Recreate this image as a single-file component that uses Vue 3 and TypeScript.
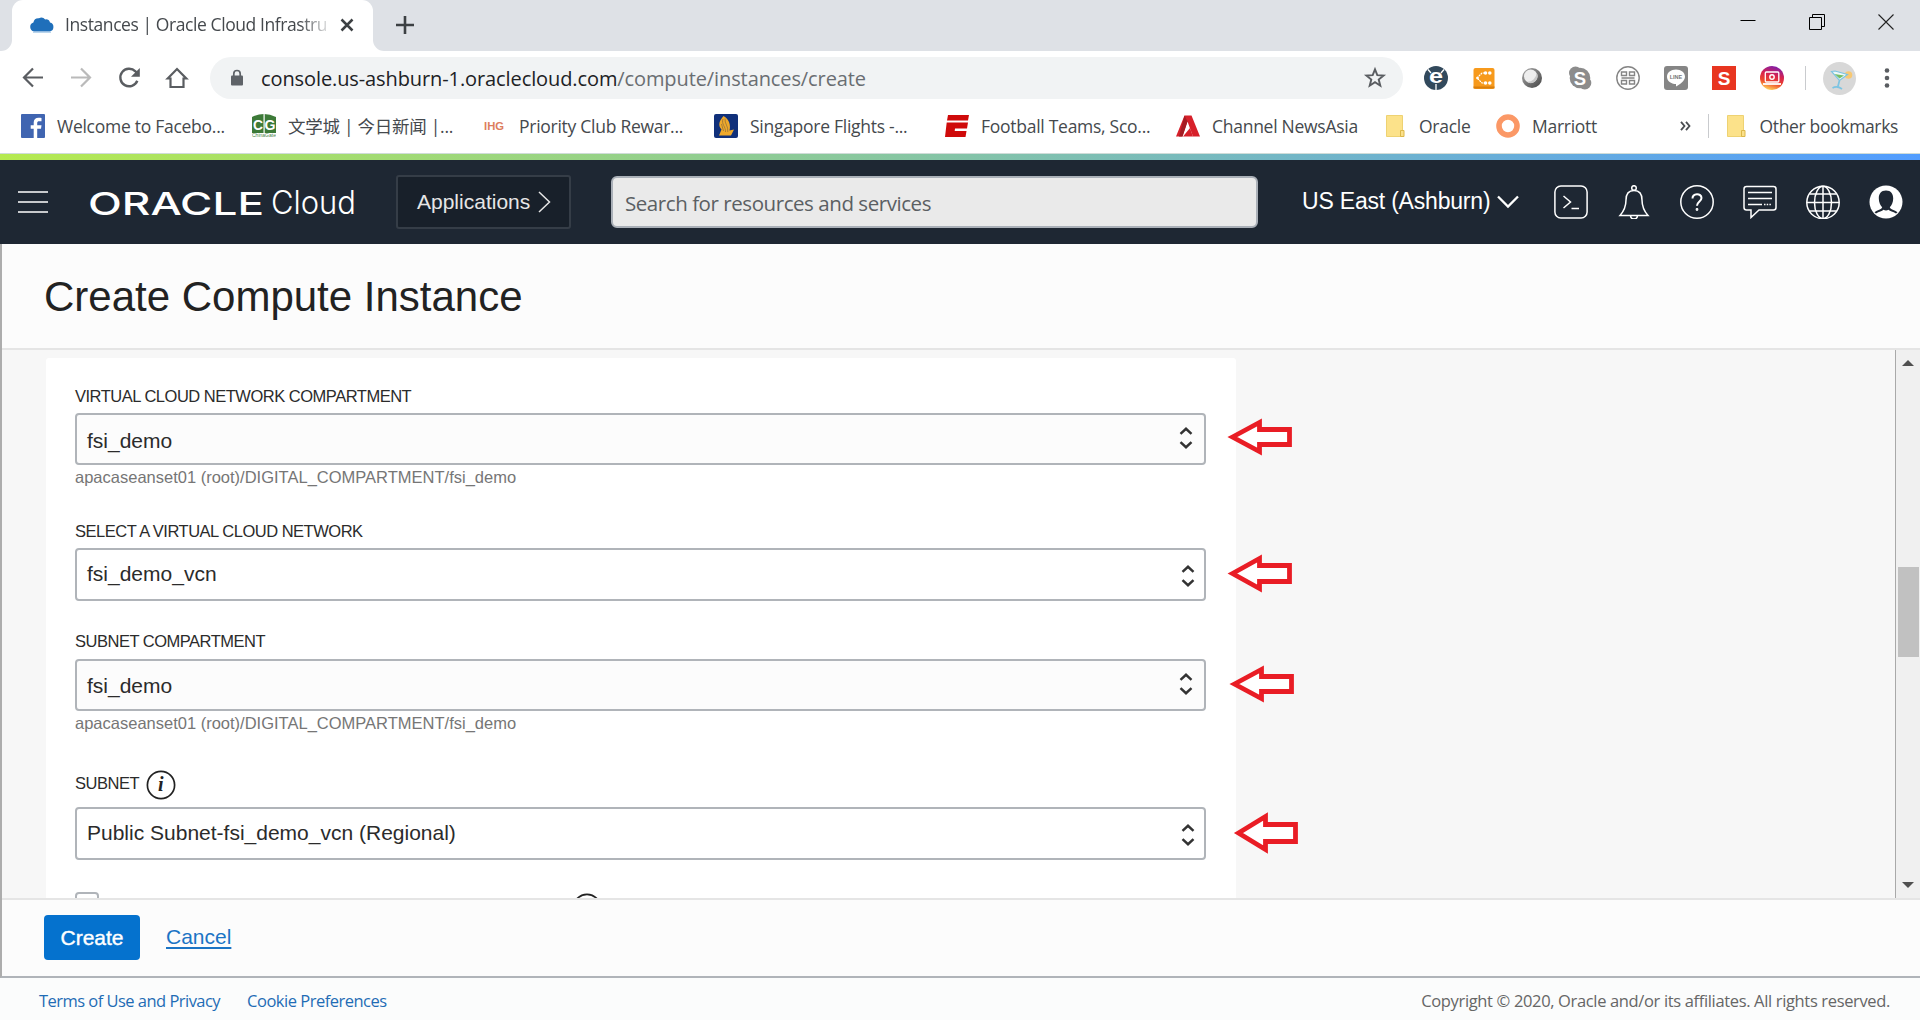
<script setup lang="ts">
interface Bookmark {
  label: string
  icon: string
  size: 'wide' | 'medium' | 'narrow' | 'auto'
}

interface Field {
  label: string
  value: string
  hint?: string
  info?: boolean
  kind: string
}

const bookmarks: Bookmark[] = [
  { label: 'Welcome to Facebo...', icon: 'facebook', size: 'wide' },
  { label: '文学城 | 今日新闻 |...', icon: 'chinagate', size: 'wide' },
  { label: 'Priority Club Rewar...', icon: 'ihg', size: 'wide' },
  { label: 'Singapore Flights -...', icon: 'singapore', size: 'wide' },
  { label: 'Football Teams, Sco...', icon: 'espn', size: 'wide' },
  { label: 'Channel NewsAsia', icon: 'cna', size: 'medium' },
  { label: 'Oracle', icon: 'folder', size: 'narrow' },
  { label: 'Marriott', icon: 'marriott', size: 'auto' },
]

const compartmentPath = 'apacaseanset01 (root)/DIGITAL_COMPARTMENT/fsi_demo'

const fields: Field[] = [
  { label: 'VIRTUAL CLOUD NETWORK COMPARTMENT', value: 'fsi_demo', hint: compartmentPath, kind: 'vcn-compartment' },
  { label: 'SELECT A VIRTUAL CLOUD NETWORK', value: 'fsi_demo_vcn', kind: 'vcn' },
  { label: 'SUBNET COMPARTMENT', value: 'fsi_demo', hint: compartmentPath, kind: 'subnet-compartment' },
  { label: 'SUBNET', value: 'Public Subnet-fsi_demo_vcn (Regional)', info: true, kind: 'subnet' },
]

// Each arrow: tip x, centre y, half height of the head, half height of the shaft.
const arrows: [number, number, number, number][] = [
  [1230.5, 87, 14.5, 7.5],
  [1230.5, 223.5, 15, 8],
  [1232.5, 334, 14.5, 7.5],
  [1236.5, 483, 16.5, 8.5],
]

function arrowPath([x, y, head, shaft]: [number, number, number, number]): string {
  const neck = x + 27
  const end = x + 57
  return `M${x} ${y}L${neck} ${y - head}V${y - shaft}H${end}V${y + shaft}H${neck}V${y + head}Z`
}
</script>

<template>
  <div class="window">
    <header class="tabstrip">
      <div class="strip-left"></div>
      <div class="tab-slot">
        <div class="tab">
          <svg class="favicon" width="24" height="16" viewBox="0 0 24 16">
            <path d="M4 14.500A4.600 4.600 0 0 1 3.400 5.600 5.300 5.300 0 0 1 9 1.200 5.300 5.300 0 0 1 15.200 2.400 4.400 4.400 0 0 1 20 5.600 4.600 4.600 0 0 1 20 14.500Z" fill="#1f6fba" />
            <path d="M3 15.300H21" stroke="#a9cbe8" stroke-width="1" />
          </svg>
          <span class="tab-title">Instances | Oracle Cloud Infrastru</span>
          <svg width="14" height="14" viewBox="0 0 14 14"><path d="M1.500 1.500 12.500 12.500M12.500 1.500 1.500 12.500" stroke="#3c4043" stroke-width="2.500" /></svg>
        </div>
      </div>
      <div class="strip-rest">
        <svg width="18" height="18" viewBox="0 0 18 18"><path d="M9 0V18M0 9H18" stroke="#3c4043" stroke-width="2.600" /></svg>
        <div class="window-buttons">
          <svg width="16" height="16" viewBox="0 0 16 16"><path d="M.5 6.500H15.500" stroke="#000" /></svg>
          <svg width="16" height="16" viewBox="0 0 16 16"><path d="M.5 3.500H12.500V15.500H.5ZM3.500 3.500V.5H15.500V12.500H12.500" fill="none" stroke="#000" /></svg>
          <svg width="16" height="16" viewBox="0 0 16 16"><path d="M.5 .5 15.500 15.500M15.500 .5 .5 15.500" stroke="#222" stroke-width="1.100" /></svg>
        </div>
      </div>
    </header>

    <div class="toolbar">
      <nav class="nav">
        <svg viewBox="0 0 24 24"><path d="M22 11.500H3.500M12 2.500 3 11.500 12 20.500" fill="none" stroke="#5a5d61" stroke-width="2.200" /></svg>
        <svg viewBox="0 0 24 24"><path d="M2 11.500H20.500M12 2.500 21 11.500 12 20.500" fill="none" stroke="#bababa" stroke-width="2.200" /></svg>
        <svg viewBox="0 0 24 24"><path d="M20.300 14.800A8.800 8.800 0 1 1 18.400 5.300L20 7" fill="none" stroke="#5a5d61" stroke-width="2.400" /><path d="M22.800 2V10.800H14Z" fill="#5a5d61" /></svg>
        <svg viewBox="0 0 24 24"><path d="M2.700 12.500 12 3 21.300 12.500H18.500V21H5.500V12.500Z" fill="none" stroke="#5a5d61" stroke-width="2.200" /></svg>
      </nav>
      <div class="omnibox">
        <svg class="lock" width="14" height="18" viewBox="0 0 14 18">
          <rect x="1" y="6.500" width="12" height="10" rx="1" fill="#5f6368" />
          <path d="M3.800 7V4.700a3.200 3.200 0 0 1 6.400 0V7" fill="none" stroke="#5f6368" stroke-width="1.700" />
        </svg>
        <span class="url"><span class="host">console.us-ashburn-1.oraclecloud.com</span>/compute/instances/create</span>
        <svg class="star" width="24" height="24" viewBox="0 0 24 24"><path d="M12 3.300 14.300 9.100 20.600 9.500 15.700 13.500 17.300 19.700 12 16.200 6.700 19.700 8.300 13.500 3.400 9.500 9.700 9.100Z" fill="none" stroke="#5a5d61" stroke-width="1.900" /></svg>
      </div>
      <div class="extensions">
        <svg viewBox="0 0 24 24"><circle cx="12" cy="12" r="12" fill="#32495c" /><path d="M4 3.500 7 7M20 3.500 17 7M12 18V24" stroke="#fff" stroke-width="1.300" /><text x="12" y="17" font-size="21" font-weight="700" text-anchor="middle" textLength="14" lengthAdjust="spacingAndGlyphs" fill="#fff">e</text></svg>
        <svg viewBox="0 0 24 24"><rect x="1.500" y="2" width="21" height="21" rx="2" fill="#f79a1c" /><path d="M1.500 21.500H22.500" stroke="#d97f0c" stroke-width="2" /><path d="M13 7H10L5 12 10 17H13" fill="none" stroke="#fff" stroke-width="1.200" stroke-dasharray="2 .7" /><g fill="#fff"><circle cx="5.500" cy="12" r="1.300" /><circle cx="13.500" cy="7" r="1.800" /><circle cx="17.800" cy="7" r="1.800" /><circle cx="13.500" cy="17" r="1.800" /><circle cx="17.800" cy="17" r="1.800" /></g></svg>
        <svg viewBox="0 0 24 24"><defs><linearGradient id="orb" x1="0" y1="0" x2="1" y2="1"><stop offset="0" stop-color="#aaa" /><stop offset="1" stop-color="#444" /></linearGradient></defs><circle cx="12" cy="12" r="10" fill="url(#orb)" /><circle cx="10.700" cy="10.300" r="6.700" fill="#eee" /><path d="M16.500 6.500A6.800 6.800 0 0 1 7 15.800 9 9 0 0 0 16.500 6.500" fill="#c8c8c8" /></svg>
        <svg viewBox="0 0 24 24"><g fill="#8c8c8c"><circle cx="12" cy="12" r="10.300" /><circle cx="7.500" cy="7" r="6.500" /><circle cx="16.800" cy="17" r="6.500" /></g><text x="12" y="18.500" font-size="18.500" font-weight="700" text-anchor="middle" fill="#fff">S</text></svg>
        <svg viewBox="0 0 24 24"><circle cx="12" cy="12" r="11.200" fill="#fff" stroke="#858585" stroke-width="1.400" /><path d="M5.500 6H10.500V9.500H5.500ZM18.500 6H13.500V9.500H18.500ZM5.500 18H10.500V14.500H5.500ZM18.500 18H13.500V14.500H18.500ZM5.500 12H18.500" fill="none" stroke="#858585" stroke-width="1.400" /></svg>
        <svg viewBox="0 0 24 24"><rect width="24" height="24" rx="3" fill="#858585" /><path d="M12 3.500C17 3.500 21 6.500 21 10.700 21 15 15.500 18.500 12 20.500V18C7 18 3 15 3 10.700 3 6.500 7 3.500 12 3.500Z" fill="#fff" /><text x="12" y="13" font-size="5.500" font-weight="700" text-anchor="middle" fill="#777">LINE</text></svg>
        <svg viewBox="0 0 24 24"><rect width="24" height="24" fill="#e83520" /><text x="12" y="18.700" font-size="19" font-weight="700" text-anchor="middle" fill="#fff">S</text></svg>
        <svg viewBox="0 0 24 24"><defs><linearGradient id="insta" x1=".7" y1="0" x2=".4" y2="1"><stop offset="0" stop-color="#7a1fb0" /><stop offset=".4" stop-color="#d8224d" /><stop offset=".7" stop-color="#ee4a2a" /><stop offset="1" stop-color="#ffd35a" /></linearGradient></defs><circle cx="12" cy="12" r="12" fill="url(#insta)" /><rect x="5.300" y="6" width="13.500" height="10" rx="1" fill="none" stroke="#fff" stroke-width="1.300" /><path d="M3 18H21" stroke="#fff" stroke-width="1.800" /><circle cx="12" cy="11" r="2.200" fill="none" stroke="#fff" stroke-width="1.400" /></svg>
      </div>
      <span class="divider"></span>
      <svg class="avatar" viewBox="0 0 33 33"><circle cx="16.500" cy="16.500" r="16.500" fill="#d8d8d8" /><circle cx="25.500" cy="13" r="3.800" fill="#f7c873" /><path d="M8.500 9.500 12 9 24.500 12.500 16.500 18.500Z" fill="#eef9f7" stroke="#7cc4e2" stroke-width="1.200" /><path d="M11.500 12 21 13.500 16.500 16.500Z" fill="#74bd68" /><path d="M16.500 18.500 14.500 26M9.500 26Q14 23.500 19 27" fill="none" stroke="#7cc4e2" stroke-width="1.700" /></svg>
      <svg class="menu" width="6" height="22" viewBox="0 0 6 22"><g fill="#5a5d61"><circle cx="3" cy="3.500" r="2.300" /><circle cx="3" cy="11" r="2.300" /><circle cx="3" cy="18.500" r="2.300" /></g></svg>
    </div>

    <div class="bookmarks">
      <div v-for="b in bookmarks" :key="b.label" class="bookmark" :class="b.size">
        <svg v-if="b.icon === 'facebook'" viewBox="0 0 24 24"><rect width="24" height="24" rx="1" fill="#4065b1" /><path d="M16.200 24V14.800H20L20.500 11.200H16.200V9C16.200 7.800 16.800 7.200 18.200 7.200H20.500V4C19.800 3.900 18.800 3.800 17.500 3.800 14.600 3.800 12.700 5.500 12.700 8.600V11.200H9.700V14.800H12.700V24Z" fill="#fff" /></svg>
        <svg v-else-if="b.icon === 'chinagate'" viewBox="0 0 24 24"><path d="M0 3Q12-3 24 3V19H0Z" fill="#3d7a38" /><path d="M11.500 0H12.700V19H11.500Z" fill="#fff" /><text x="1" y="16" font-size="14" font-weight="700" textLength="10" lengthAdjust="spacingAndGlyphs" fill="#fff">C</text><text x="12.500" y="16" font-size="14" font-weight="700" textLength="11" lengthAdjust="spacingAndGlyphs" fill="#fff">G</text><text x="0" y="22.800" font-size="4.800" textLength="24" lengthAdjust="spacingAndGlyphs" fill="#4d8549">ChinaGate</text></svg>
        <svg v-else-if="b.icon === 'ihg'" viewBox="0 0 24 24"><text x="1" y="15.500" font-size="10" font-weight="700" textLength="20" lengthAdjust="spacingAndGlyphs" fill="#dd7d5e">IHG</text></svg>
        <svg v-else-if="b.icon === 'singapore'" viewBox="0 0 24 24"><rect width="24" height="24" rx="2" fill="#10307a" /><path d="M9.500 2C5.500 6.500 3.500 11 7.500 15.500L5 21.500 17 21.500 20 15.500 15.500 16.500C17 11 15 5 9.500 2Z" fill="#efa92b" /><path d="M9 5C7 10 12 13 11.500 18M11 4.500C10.500 10 14.500 12 13.800 18M7.500 10 9.500 17" fill="none" stroke="#8a6a3a" stroke-width=".7" /></svg>
        <svg v-else-if="b.icon === 'espn'" viewBox="0 0 24 24"><path d="M3 1H24L23 6.500H2ZM1.700 8.500H23L22 14.500H10L9.700 17H21.500L20.500 23H0Z" fill="#cf0a0a" /></svg>
        <svg v-else-if="b.icon === 'cna'" viewBox="0 0 24 24"><path d="M8.500 1.500H15.500L24 22.500H17L11.500 7.500 6.500 22.500H0Z" fill="#d7202a" /><path d="M8.500 1.500 11.500 7.500 6.500 22.500H3Z" fill="#a41c23" /><path d="M14 14 17 22.500H7Z" fill="#d7202a" /></svg>
        <svg v-else-if="b.icon === 'folder'" viewBox="0 0 24 24"><path d="M3.500 1.500H19.500V22.500H3.500Z" fill="#fce28a" stroke="#eed272" /><path d="M17.500 22.500V16.500H21V22.500Z" fill="#fbe08a" stroke="#dcb84a" /></svg>
        <svg v-else viewBox="0 0 24 24"><circle cx="12" cy="12" r="9" fill="none" stroke="#fb9866" stroke-width="5.600" /></svg>
        <span>{{ b.label }}</span>
      </div>
      <div class="bookmark-end">
        <svg class="more" width="11" height="10" viewBox="0 0 11 10"><path d="M1 .8 4.500 5 1 9.200M6 .8 9.500 5 6 9.200" fill="none" stroke="#4a4d51" stroke-width="1.800" /></svg>
        <span class="divider"></span>
        <div class="bookmark other">
          <svg viewBox="0 0 24 24"><path d="M3.500 1.500H19.500V22.500H3.500Z" fill="#fce28a" stroke="#eed272" /><path d="M17.500 22.500V16.500H21V22.500Z" fill="#fbe08a" stroke="#dcb84a" /></svg>
          <span>Other bookmarks</span>
        </div>
      </div>
    </div>

    <div class="rainbow"></div>

    <header class="console">
      <svg class="burger" width="30" height="22" viewBox="0 0 30 22"><path d="M0 1H30M0 11H30M0 21H30" stroke="#fff" stroke-width="1.500" /></svg>
      <svg class="brand" width="268" height="54" viewBox="-2 -10 268 54">
        <text x="-2" y="29.500" class="oracle" textLength="176" lengthAdjust="spacingAndGlyphs">ORACLE</text>
        <text x="181" y="29" class="cloud" textLength="85" lengthAdjust="spacingAndGlyphs">Cloud</text>
      </svg>
      <button class="applications">
        Applications
        <svg width="13" height="22" viewBox="0 0 13 22"><path d="M1 1 11.500 11 1 21" fill="none" stroke="#e6e6e6" stroke-width="1.500" /></svg>
      </button>
      <div class="search">Search for resources and services</div>
      <div class="region">
        <span>US East (Ashburn)</span>
        <svg width="22" height="14" viewBox="0 0 22 14"><path d="M1 1.500 11 11.500 21 1.500" fill="none" stroke="#fff" stroke-width="2.300" /></svg>
      </div>
      <div class="actions">
        <svg viewBox="0 0 34 34"><rect x=".9" y=".9" width="32.200" height="32.200" rx="6" /><path d="M9.500 11 16.500 17 9.500 23M17.500 23.500H25" /></svg>
        <svg viewBox="0 0 34 34"><circle cx="17" cy="3" r="2.300" /><path d="M17 5.500C11 5.500 9 10 9 15 9 21 7 26 3 30.500H31C27 26 25 21 25 15 25 10 23 5.500 17 5.500ZM13.500 31C14 35 20 35 20.500 31" /></svg>
        <svg viewBox="0 0 34 34"><circle cx="17" cy="17" r="16.200" /><path d="M12.500 13.500C12.500 7.800 21.500 7.800 21.500 13 21.500 16.500 17 16.500 17 20.800" stroke-width="2" /><circle cx="17" cy="24.500" r=".6" stroke-width="1.600" /></svg>
        <svg viewBox="0 0 34 34"><path d="M3.500 1.500H30.500Q33 1.500 33 4V22.500Q33 25 30.500 25H16L8 32.500V25H3.500Q1 25 1 22.500V4Q1 1.500 3.500 1.500ZM5 7.500H29M5 13.500H29M5 19.500H19" /><path d="M21 19.500H29" stroke-dasharray="1.500 1.200" /></svg>
        <svg viewBox="0 0 34 34"><circle cx="17" cy="17.500" r="16.200" /><ellipse cx="17" cy="17.500" rx="8.500" ry="16.200" /><path d="M17 1.300V33.700M.8 17.500H33.200M3.500 9H30.500M3.500 26H30.500" /></svg>
        <svg class="user" viewBox="0 0 34 34"><circle cx="17" cy="17" r="16.500" fill="#fff" stroke="none" /><path d="M17 5.500C12 5.500 9.800 9 9.800 13.500 9.800 17.500 11.500 20.500 13.200 22.200 12.500 24.500 8.500 25 5.500 27.200L7 28.500C10 26.500 13 26.500 14.500 24.700 16 25.800 18 25.800 19.500 24.700 21 26.500 24 26.500 27 28.500L28.500 27.200C25.500 25 21.500 24.500 20.800 22.200 22.500 20.500 24.200 17.500 24.200 13.500 24.200 9 22 5.500 17 5.500Z" fill="#1e2733" stroke="none" /></svg>
      </div>
    </header>

    <main class="page">
      <div class="title-bar"><h1>Create Compute Instance</h1></div>
      <div class="viewport">
        <div class="content">
          <section class="card">
            <div v-for="f in fields" :key="f.kind" class="field" :class="f.kind">
              <div class="label">
                <span>{{ f.label }}</span>
                <svg v-if="f.info" width="30" height="30" viewBox="0 0 30 30"><circle cx="15" cy="15" r="13.600" fill="none" stroke="#222" stroke-width="1.700" /><text x="14.500" y="21" text-anchor="middle" class="info">i</text></svg>
              </div>
              <div class="select" :class="{ tinted: f.hint }">
                <span>{{ f.value }}</span>
                <svg width="14" height="24" viewBox="0 0 14 24"><path d="M1.500 7.800 7 2.800 12.500 7.800M1.500 16.200 7 21.200 12.500 16.200" fill="none" stroke="#333" stroke-width="2.500" /></svg>
              </div>
              <div v-if="f.hint" class="hint">{{ f.hint }}</div>
            </div>
            <div class="next-row">
              <span class="checkbox"></span>
              <svg width="30" height="30" viewBox="0 0 30 30"><circle cx="15" cy="15" r="13.600" fill="none" stroke="#222" stroke-width="1.700" /></svg>
            </div>
          </section>
        </div>
        <div class="scrollbar">
          <svg class="up" width="12" height="6" viewBox="0 0 12 6"><path d="M0 6 6 0 12 6Z" fill="#505050" /></svg>
          <div class="thumb"></div>
          <svg class="down" width="12" height="6" viewBox="0 0 12 6"><path d="M0 0 6 6 12 0Z" fill="#505050" /></svg>
        </div>
        <svg class="annotations" width="1400" height="548" viewBox="0 0 1400 548">
          <path v-for="(a, i) in arrows" :key="i" :d="arrowPath(a)" fill="#fff" stroke="#e91d25" stroke-width="4.800" />
        </svg>
      </div>
      <div class="action-bar">
        <button class="create">Create</button>
        <a class="cancel">Cancel</a>
      </div>
    </main>

    <footer class="legal">
      <a class="terms">Terms of Use and Privacy</a>
      <a class="cookies">Cookie Preferences</a>
      <span class="copyright">Copyright © 2020, Oracle and/or its affiliates. All rights reserved.</span>
    </footer>
  </div>
</template>

<style>
body {
  margin: 0;
  overflow: hidden;
}
</style>

<style scoped>
.window {
  display: flex;
  flex-direction: column;
  width: 1920px;
  height: 1020px;
  overflow: hidden;
  background: #fff;
  font-family: "Liberation Sans", Arial, sans-serif;
  white-space: nowrap;
}
.window *,
.window *::before {
  box-sizing: border-box;
}
svg {
  display: block;
  flex: none;
}
button {
  font: inherit;
  border: 0;
  padding: 0;
}

/* Browser chrome */
.tabstrip {
  display: flex;
  height: 51px;
  font-family: "Open Sans", "Noto Sans", sans-serif;
}
.strip-left {
  width: 12px;
  background: #dee1e6;
  border-bottom-right-radius: 11px;
}
.tab-slot {
  width: 361px;
  background: linear-gradient(#dee1e6 20px, #fff 20px);
}
.tab {
  display: flex;
  align-items: center;
  height: 51px;
  padding: 0 0 2px 18px;
  background: #fff;
  border-radius: 11px 11px 0 0;
}
.tab-title {
  width: 262px;
  margin: 0 13px 0 11px;
  padding-bottom: 1px;
  overflow: hidden;
  font-size: 17.5px;
  letter-spacing: -0.42px;
  color: #45494d;
  mask-image: linear-gradient(90deg, #000 235px, transparent 268px);
}
.strip-rest {
  flex: 1;
  display: flex;
  justify-content: space-between;
  padding: 0 26px 0 23px;
  background: #dee1e6;
  border-bottom-left-radius: 11px;
}
.strip-rest > svg {
  margin-top: 16px;
}
.window-buttons {
  display: flex;
  gap: 53px;
  margin-top: 14px;
}
.toolbar {
  display: flex;
  align-items: center;
  height: 54px;
  padding-left: 21px;
}
.nav {
  display: flex;
  gap: 24px;
}
.nav svg,
.extensions svg,
.bookmark svg {
  width: 24px;
  height: 24px;
}
.omnibox {
  display: flex;
  align-items: center;
  width: 1193px;
  height: 42px;
  margin: 0 21px;
  padding-left: 20px;
  border-radius: 21px;
  background: #f1f3f4;
  font-family: "Open Sans", "Noto Sans", sans-serif;
}
.url {
  margin-left: 17px;
  font-size: 20px;
  letter-spacing: -0.1px;
  color: #6a6e72;
}
.host {
  color: #202124;
}
.star {
  margin: 0 16px 0 auto;
}
.extensions {
  display: flex;
  gap: 24px;
}
.divider {
  width: 1px;
  height: 24px;
  background: #c9cbce;
}
.toolbar .divider {
  margin-left: 21px;
}
.avatar {
  width: 33px;
  height: 33px;
  margin-left: 17px;
}
.menu {
  margin-left: 28px;
}
.bookmarks {
  display: flex;
  align-items: center;
  gap: 26px;
  height: 48px;
  padding: 0 22px 6px 21px;
  font-family: "Open Sans", "Noto Sans", "Noto Sans CJK SC", sans-serif;
}
.bookmark {
  display: flex;
  align-items: center;
  gap: 12px;
  font-size: 17.5px;
  line-height: 24px;
  letter-spacing: -0.27px;
  color: #45494d;
}
.bookmark span {
  padding-bottom: 1px;
}
.bookmark svg {
  font-family: "Liberation Sans", sans-serif;
  letter-spacing: 0;
}
.wide {
  width: 205px;
}
.medium {
  width: 181px;
}
.narrow {
  width: 87px;
}
.bookmark-end {
  display: flex;
  align-items: center;
  margin-left: auto;
}
.more {
  margin-right: 17px;
}
.bookmark.other {
  margin-left: 15px;
  letter-spacing: -0.35px;
}
.rainbow {
  height: 7px;
  border-top: 1px solid #cfdcd8;
  background: linear-gradient(90deg, #b5ea50, #529dff);
}

/* Console header */
.console {
  display: flex;
  align-items: center;
  height: 84px;
  padding-left: 18px;
  background: #1e2733;
  color: #fff;
}
.brand {
  margin-left: 40px;
}
.oracle {
  font: 500 31.5px Inter, sans-serif;
  fill: #fff;
}
.cloud {
  font: 300 32px Inter, sans-serif;
  fill: #fff;
}
.applications {
  display: flex;
  align-items: center;
  gap: 8px;
  width: 175px;
  height: 54px;
  margin-left: 40px;
  padding-left: 19px;
  border: 2px solid #353d47;
  border-radius: 3px;
  background: #18202a;
  color: #e6e6e6;
  font-size: 21px;
}
.search {
  width: 647px;
  height: 52px;
  margin-left: 40px;
  padding-left: 12px;
  border: 2px solid #aab0b8;
  border-radius: 6px;
  background: #eaeaea;
  color: #5b5f63;
  font: 20.5px/50px "Open Sans", "Noto Sans", sans-serif;
  letter-spacing: -0.44px;
}
.region {
  display: flex;
  align-items: center;
  gap: 7px;
  margin-left: 44px;
  font-size: 23px;
  letter-spacing: -0.2px;
}
.region span {
  padding-bottom: 2px;
}
.actions {
  display: flex;
  gap: 29px;
  margin: 0 17px 0 auto;
}
.actions svg {
  width: 34px;
  height: 34px;
  fill: none;
  stroke: #fff;
  stroke-width: 1.5;
}

/* Page */
.page {
  display: flex;
  flex-direction: column;
  height: 734px;
  border-left: 2px solid #adadad;
  border-bottom: 2px solid #b0b4b9;
  background: #fcfcfc;
}
.title-bar {
  height: 106px;
  padding-left: 42px;
  border-bottom: 2px solid #e5e5e5;
}
h1 {
  margin: 0;
  font-size: 42px;
  font-weight: 400;
  line-height: 106px;
  color: #222;
}
.viewport {
  position: relative;
  display: flex;
  height: 548px;
  overflow: hidden;
  background: #f7f7f7;
}
.content {
  flex: 1;
  padding: 8px 0 0 44px;
}
.card {
  width: 1190px;
  height: 700px;
  padding: 28px 30px 0 29px;
  border-radius: 3px;
  background: #fff;
}
.label {
  display: flex;
  align-items: center;
  gap: 7px;
  height: 20px;
  margin-bottom: 7px;
  font-size: 16.5px;
  letter-spacing: -0.49px;
  color: #2b2b2b;
}
.select {
  display: flex;
  align-items: center;
  justify-content: space-between;
  height: 53px;
  padding: 0 9px 0 10px;
  border: 2px solid #b0b4b9;
  border-radius: 4px;
  font-size: 21px;
  color: #2b2b2b;
}
.select span {
  padding-bottom: 2px;
}
.select svg {
  margin-top: 2px;
}
.select.tinted {
  height: 52px;
  padding: 3px 11px 0 10px;
  background: #fcfcfc;
}
.select.tinted span {
  padding-bottom: 0;
}
.subnet-compartment .select.tinted span {
  padding-bottom: 2px;
}
.select.tinted svg {
  margin-top: -6px;
}
.hint {
  height: 20px;
  margin-top: 2px;
  font-size: 16.5px;
  line-height: 20px;
  color: #767676;
}
.vcn-compartment {
  margin-bottom: 34px;
}
.vcn {
  margin-bottom: 30px;
}
.subnet-compartment {
  margin-bottom: 38px;
}
.subnet-compartment .label {
  margin-bottom: 8px;
}
.subnet {
  margin-bottom: 32px;
}
.subnet .label {
  height: 28px;
  margin-bottom: 8px;
}
.subnet .label span {
  padding-bottom: 4px;
}
.info {
  font: italic 700 20px "Liberation Serif", serif;
  fill: #222;
}
.next-row {
  display: flex;
  justify-content: space-between;
  width: 527px;
}
.next-row svg {
  margin-top: 1px;
}
.checkbox {
  width: 24px;
  height: 24px;
  border: 2px solid #b0b4b9;
  border-radius: 4px;
}
.scrollbar {
  display: flex;
  flex-direction: column;
  align-items: center;
  width: 25px;
  border-left: 1px solid #a9a9a9;
  background: #f0f0f0;
}
.up {
  margin-top: 10px;
}
.thumb {
  width: 21px;
  height: 90px;
  margin-top: 201px;
  background: #c1c1c1;
}
.down {
  margin: auto 0 10px;
}
.annotations {
  position: absolute;
  left: 0;
  top: 0;
}
.action-bar {
  display: flex;
  flex: 1;
  align-items: center;
  gap: 26px;
  padding: 0 0 1px 42px;
  border-top: 2px solid #e5e5e5;
  font-size: 21px;
}
.create {
  width: 96px;
  height: 45px;
  border-radius: 4px;
  background: #0572ce;
  color: #fff;
  -webkit-text-stroke: 0.4px #fff;
}
.cancel {
  height: 27px;
  line-height: 26px;
  color: #1b74c5;
  text-decoration: underline;
  text-underline-offset: 3px;
  text-decoration-thickness: 2px;
}

/* Legal footer */
.legal {
  display: flex;
  flex: 1;
  align-items: center;
  padding: 3px 30px 0 39px;
  background: #fbfcfc;
  font: 16.5px "Open Sans", "Noto Sans", sans-serif;
  color: #666;
}
.legal a {
  color: #1f6cb5;
}
.terms {
  letter-spacing: -0.53px;
}
.cookies {
  margin-left: 27px;
  letter-spacing: -0.5px;
}
.copyright {
  margin-left: auto;
  letter-spacing: -0.35px;
}
</style>
